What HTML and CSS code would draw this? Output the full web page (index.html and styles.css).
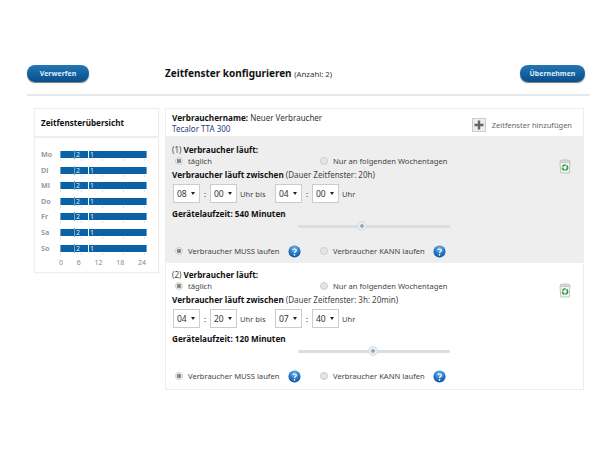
FILE: index.html
```html
<!DOCTYPE html>
<html lang="de">
<head>
<meta charset="utf-8">
<title>Zeitfenster konfigurieren</title>
<link rel="stylesheet" href="styles.css">
</head>
<body>
<svg class="defs" width="0" height="0">
  <defs>
    <radialGradient id="helpGrad" cx="50%" cy="30%" r="70%"><stop offset="0" stop-color="#7fbfee"/><stop offset=".55" stop-color="#2a7cc8"/><stop offset="1" stop-color="#0d4f98"/></radialGradient>
    <symbol id="help" viewBox="0 0 14 14"><circle cx="7" cy="7" r="6.5" fill="url(#helpGrad)"/><path d="M5 5.4C5.2 4 8.8 3.8 9 5.6 9.1 7 7 7 7 8.6" fill="none" stroke="#fff" stroke-width="1.2"/><circle cx="7" cy="10.6" r=".9" fill="#fff"/></symbol>
    <symbol id="bin" viewBox="0 0 12 15"><path d="M1 2.5h10l-.7 11.5H1.7z" fill="#f6f6f3" stroke="#b5b5b0" stroke-width=".8"/><ellipse cx="6" cy="2.3" rx="5" ry="1.4" fill="#dcdcd8" stroke="#aaa" stroke-width=".6"/><circle cx="6" cy="8.6" r="2.6" fill="none" stroke="#2a9a3f" stroke-width="1.6" stroke-dasharray="3.6 .9"/></symbol>
    <symbol id="plus" viewBox="0 0 14 14"><rect x=".5" y=".5" width="13" height="13" fill="#eee" stroke="#ccc"/><path d="M7 2.5v9M2.5 7h9" stroke="#666" stroke-width="2.4"/></symbol>
  </defs>
</svg>
<div class="page">
  <header class="topbar">
    <button class="btn btn-left" type="button">Verwerfen</button>
    <h1 class="title">Zeitfenster konfigurieren <small>(Anzahl: 2)</small></h1>
    <button class="btn btn-right" type="button">Übernehmen</button>
  </header>
  <div class="content">
    <aside class="overview">
      <h2 class="overview-title">Zeitfensterübersicht</h2>
      <div class="chart">
        <div class="chart-row"><span class="day">Mo</span><div class="bar"><span class="seg seg-2">2</span><span class="seg seg-1">1</span></div></div>
        <div class="chart-row"><span class="day">Di</span><div class="bar"><span class="seg seg-2">2</span><span class="seg seg-1">1</span></div></div>
        <div class="chart-row"><span class="day">Mi</span><div class="bar"><span class="seg seg-2">2</span><span class="seg seg-1">1</span></div></div>
        <div class="chart-row"><span class="day">Do</span><div class="bar"><span class="seg seg-2">2</span><span class="seg seg-1">1</span></div></div>
        <div class="chart-row"><span class="day">Fr</span><div class="bar"><span class="seg seg-2">2</span><span class="seg seg-1">1</span></div></div>
        <div class="chart-row"><span class="day">Sa</span><div class="bar"><span class="seg seg-2">2</span><span class="seg seg-1">1</span></div></div>
        <div class="chart-row"><span class="day">So</span><div class="bar"><span class="seg seg-2">2</span><span class="seg seg-1">1</span></div></div>
        <div class="axis"><span>0</span><span>6</span><span>12</span><span>18</span><span>24</span></div>
      </div>
    </aside>
    <main class="panel">
      <div class="panel-head">
        <div>
          <div class="name"><b>Verbrauchername:</b> Neuer Verbraucher</div>
          <div class="model">Tecalor TTA 300</div>
        </div>
        <div class="add"><svg class="add-icon"><use href="#plus"/></svg>Zeitfenster hinzufügen</div>
      </div>

      <section class="window window-gray">
        <svg class="bin"><use href="#bin"/></svg>
        <div class="line"><span class="idx">(1)</span> <b>Verbraucher läuft:</b></div>
        <div class="radios">
          <label class="radio-item r-first"><input class="radio" type="radio" name="a1" checked>täglich</label>
          <label class="radio-item"><input class="radio" type="radio" name="a1">Nur an folgenden Wochentagen</label>
        </div>
        <div class="line between"><b>Verbraucher läuft zwischen</b> <span class="muted">(Dauer Zeitfenster: 20h)</span></div>
        <div class="times">
          <span class="sel-wrap"><select class="sel"><option>08</option></select></span><span class="colon">:</span><span class="sel-wrap"><select class="sel"><option>00</option></select></span><span class="t-bis">Uhr bis</span>
          <span class="sel-wrap"><select class="sel"><option>04</option></select></span><span class="colon">:</span><span class="sel-wrap"><select class="sel"><option>00</option></select></span><span class="t-uhr">Uhr</span>
        </div>
        <div class="line runtime"><b>Gerätelaufzeit: 540 Minuten</b></div>
        <div class="slider"><span class="thumb" style="left:38.6%"></span></div>
        <div class="modes">
          <label class="radio-item m-first"><input class="radio" type="radio" name="b1" checked>Verbraucher MUSS laufen</label><svg class="help"><use href="#help"/></svg>
          <label class="radio-item m-second"><input class="radio" type="radio" name="b1">Verbraucher KANN laufen</label><svg class="help"><use href="#help"/></svg>
        </div>
      </section>

      <section class="window window-white">
        <svg class="bin"><use href="#bin"/></svg>
        <div class="line"><span class="idx">(2)</span> <b>Verbraucher läuft:</b></div>
        <div class="radios">
          <label class="radio-item r-first"><input class="radio" type="radio" name="a2" checked>täglich</label>
          <label class="radio-item"><input class="radio" type="radio" name="a2">Nur an folgenden Wochentagen</label>
        </div>
        <div class="line between"><b>Verbraucher läuft zwischen</b> <span class="muted">(Dauer Zeitfenster: 3h: 20min)</span></div>
        <div class="times">
          <span class="sel-wrap"><select class="sel"><option>04</option></select></span><span class="colon">:</span><span class="sel-wrap"><select class="sel"><option>20</option></select></span><span class="t-bis">Uhr bis</span>
          <span class="sel-wrap"><select class="sel"><option>07</option></select></span><span class="colon">:</span><span class="sel-wrap"><select class="sel"><option>40</option></select></span><span class="t-uhr">Uhr</span>
        </div>
        <div class="line runtime"><b>Gerätelaufzeit: 120 Minuten</b></div>
        <div class="slider"><span class="thumb" style="left:46%"></span></div>
        <div class="modes">
          <label class="radio-item m-first"><input class="radio" type="radio" name="b2" checked>Verbraucher MUSS laufen</label><svg class="help"><use href="#help"/></svg>
          <label class="radio-item m-second"><input class="radio" type="radio" name="b2">Verbraucher KANN laufen</label><svg class="help"><use href="#help"/></svg>
        </div>
      </section>
    </main>
  </div>
</div>
</body>
</html>
```
FILE: styles.css
```css
* { box-sizing: border-box; }
html, body { margin: 0; background: #fff; }
body { font: 8px/12px "Noto Sans", Tahoma, sans-serif; color: #222; width: 600px; height: 450px; overflow: hidden; }
.defs { display: block; height: 0; }
.page { padding: 65px 10px 0 27px; }
b { font-weight: bold; font-size: 8.2px; color: #111; }

.topbar { display: flex; align-items: center; box-sizing: content-box; height: 17px; padding: 0 5px 12px 0; border-bottom: 2px solid #e8e8e8; }
.btn { height: 17px; border: 0; border-radius: 8px; background: linear-gradient(#2377b5, #0a4d8c); color: #dfeefa; font: bold 7px/16px "Noto Sans", sans-serif; padding: 0; box-shadow: 0 1px 1px #777; }
.btn-left { width: 62px; }
.btn-right { width: 65px; }
.title { flex: 1; margin: 0 0 0 76px; font: bold 10px/17px "Noto Sans", sans-serif; color: #111; }
.title small { font: 7.8px "Noto Sans", sans-serif; color: #333; }

.content { display: flex; align-items: flex-start; padding: 12px 0 0 7px; }
.overview { width: 125px; height: 165px; border: 1px solid #eee; box-shadow: 0 0 1px #eee; margin-right: 6px; }
.overview-title { margin: 0; height: 29px; border-bottom: 2px solid #eee; padding: 8px 0 0 6px; font: bold 8.1px/12px "Noto Sans", sans-serif; color: #111; }
.chart { padding: 13px 10px 0 6px; }
.chart-row { display: flex; align-items: flex-start; height: 15.6px; }
.day { width: 19px; font: bold 7.2px/7px "Noto Sans", sans-serif; color: #a09a9a; }
.bar { position: relative; width: 87px; height: 7px; background: #0a62a5; border-left: 1px solid #6aa3d3; border-right: 1px solid #6aa3d3; }
.bar::after { content: ""; position: absolute; top: 8px; left: -1px; right: -1px; height: 2px; background: repeating-linear-gradient(90deg, #ddd 0 1px, transparent 1px 21px); }
.seg { position: absolute; top: -1px; bottom: -1px; color: #dcebf7; font: 7px/9px "Noto Sans", sans-serif; padding-left: 1px; }
.seg-2 { left: 13px; width: 14px; border-left: 1px solid #6aa3d3; }
.seg-1 { left: 27px; border-left: 1px solid #fff; }
.axis { display: flex; justify-content: space-between; margin: -2px 0 0 18px; width: 87px; font: 7px/9px "Noto Sans", sans-serif; color: #888; }

.panel { width: 419px; height: 282px; border: 1px solid #eee; }
.panel-head { display: flex; justify-content: space-between; height: 27px; padding: 3px 11px 0 6px; }
.name { line-height: 12px; color: #333; }
.model { line-height: 9px; color: #1f3f7f; }
.add { display: flex; align-items: center; margin-top: 5px; height: 16px; color: #666; font-size: 7.5px; }
.add-icon { display: block; width: 14px; height: 14px; margin-right: 6px; }

.window { position: relative; padding: 0 6px; }
.window-gray { background: #eee; height: 127px; padding-top: 8px; }
.window-white { height: 126px; padding-top: 6px; }
.bin { position: absolute; right: 12px; top: 23px; width: 12px; height: 15px; }
.window-white .bin { top: 20px; }
.line { height: 12px; line-height: 12px; color: #333; white-space: nowrap; }
.idx, .muted { color: #444; }
.radios { display: flex; height: 12px; margin-top: -1px; padding-left: 3px; }
.radio-item { display: flex; align-items: center; color: #444; white-space: nowrap; font-size: 7.6px; }
.r-first { width: 145px; }
.radio { appearance: none; display: block; flex: none; width: 8px; height: 8px; margin: 0 5px 0 0; border-radius: 50%; border: 1px solid #ccc; background: #e6e6e6; }
.radio:checked { background: radial-gradient(circle, #888 2px, #f4f4f4 2.5px); }
.between { margin-top: 2px; }
.times { display: flex; align-items: center; height: 19px; margin: 3px 0 0 1px; font-size: 7.6px; }
.sel-wrap { position: relative; display: block; width: 27px; height: 19px; }
.sel-wrap::after { content: ""; position: absolute; right: 5px; top: 8px; border: 2.5px solid transparent; border-top: 3.5px solid #222; border-bottom: 0; pointer-events: none; }
.sel { appearance: none; display: block; width: 27px; height: 19px; padding: 0 0 0 3px; margin: 0; border: 1px solid #ccc; border-radius: 0; color: #333; background: #fff; font: 8.5px "Noto Sans", sans-serif; }
.colon { width: 10px; text-align: center; color: #333; }
.t-bis { width: 38px; padding-left: 3px; color: #444; }
.t-uhr { padding-left: 3px; color: #444; }
.runtime { margin-top: 5px; }
.slider { position: relative; width: 152px; height: 3px; margin: 5px 0 0 126px; border-radius: 2px; background: #ddd; }
.thumb { position: absolute; top: -4px; width: 10px; height: 10px; border-radius: 50%; border: 1px solid #ddd; background: radial-gradient(circle, #8aa9c4 1.5px, #e9edf0 2px); }
.modes { display: flex; align-items: center; height: 14px; margin-top: 16px; padding-left: 3px; }
.m-first { width: 113px; }
.m-second { width: 113px; margin-left: 19px; }
.help { display: block; flex: none; width: 13px; height: 13px; }
```
